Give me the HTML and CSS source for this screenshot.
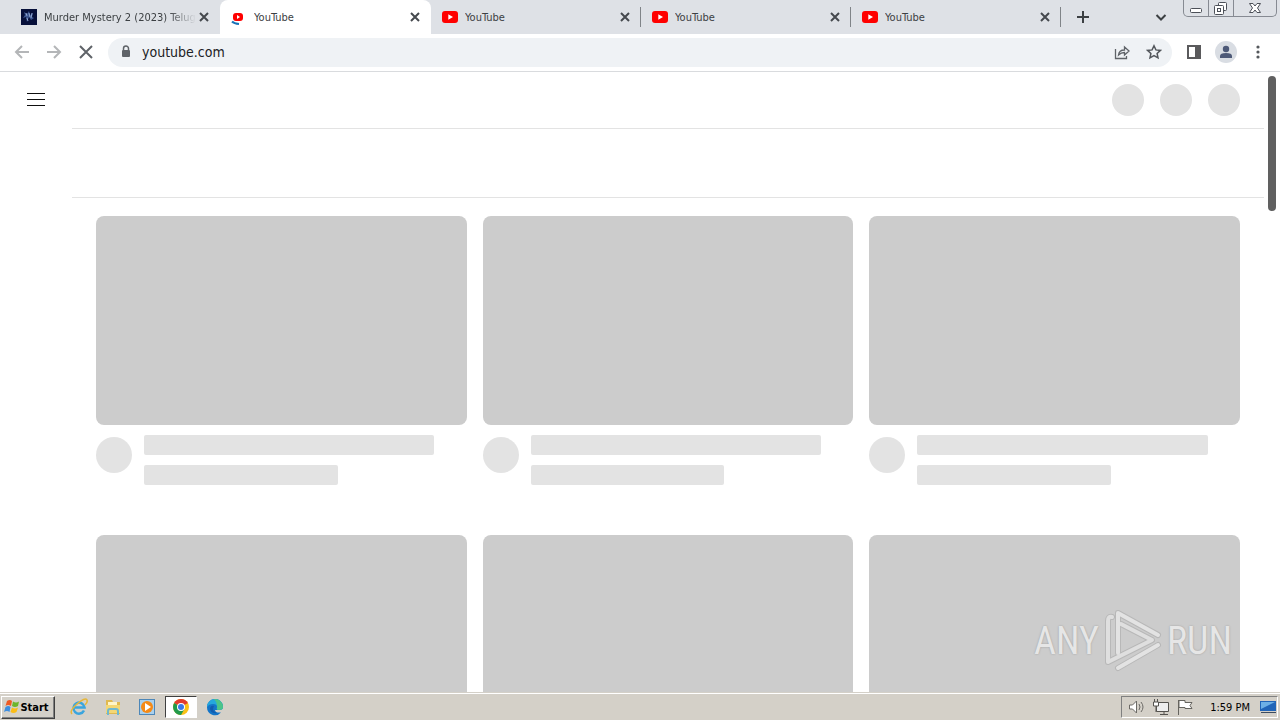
FILE: index.html
```html
<!DOCTYPE html>
<html lang="en">
<head>
    <meta charset="UTF-8">
    <meta name="viewport" content="width=device-width, initial-scale=1.0">
    <title>YouTube</title>
    <link rel="stylesheet" href="styles.css">
</head>
<body>
<!-- shared icons -->
<svg class="defs" aria-hidden="true">
    <symbol id="close" viewBox="0 0 16 16"><path d="M4 4l8 8M12 4l-8 8" stroke="#45494e" stroke-width="2"/></symbol>
    <symbol id="yt" viewBox="0 0 16 16"><rect y="2" width="16" height="12" rx="3" fill="#f00"/><path d="M6.3 5.3v5.4L11 8z" fill="#fff"/></symbol>
</svg>

<header class="tabstrip">
    <div class="tab">
        <svg class="favicon" viewBox="0 0 16 16">
            <rect width="16" height="16" fill="#07103a"/>
            <path d="M3 3l3 2 2-3 1 4 3-2-1 4 2 1-3 2-2-3-2 5-1-5-3 1 2-3z" fill="#3d5690"/>
            <path d="M5 4l1 3M8 4l1 4M11 4l-1 5M6 9l1 3" stroke="#8fa6d0"/>
        </svg>
        <span class="title fade">Murder Mystery 2 (2023) Telug</span>
        <button class="close" aria-label="Close tab"><svg><use href="#close"/></svg></button>
    </div>
    <div class="tab active">
        <svg class="favicon" viewBox="0 0 16 16">
            <rect x="2" y="4" width="10" height="8" rx="3" fill="#f00"/><path d="M6 6v4l3-2z" fill="#fff"/>
            <path d="M1 12.500q2 2 7 2.500" fill="none" stroke="#1a73b8" stroke-width="2"/>
        </svg>
        <span class="title">YouTube</span>
        <button class="close" aria-label="Close tab"><svg><use href="#close"/></svg></button>
    </div>
    <div class="tab divided">
        <svg class="favicon"><use href="#yt"/></svg>
        <span class="title">YouTube</span>
        <button class="close" aria-label="Close tab"><svg><use href="#close"/></svg></button>
    </div>
    <div class="tab divided">
        <svg class="favicon"><use href="#yt"/></svg>
        <span class="title">YouTube</span>
        <button class="close" aria-label="Close tab"><svg><use href="#close"/></svg></button>
    </div>
    <div class="tab divided">
        <svg class="favicon"><use href="#yt"/></svg>
        <span class="title">YouTube</span>
        <button class="close" aria-label="Close tab"><svg><use href="#close"/></svg></button>
    </div>
    <button class="new-tab" aria-label="New tab"><svg viewBox="0 0 16 16"><path d="M8 2v12M2 8h12" stroke="#3c4043" stroke-width="2"/></svg></button>
    <button class="tab-search" aria-label="Search tabs"><svg viewBox="0 0 16 16"><path d="M3.500 6L8 10.500 12.500 6" fill="none" stroke="#3c4043" stroke-width="2"/></svg></button>
    <div class="window-buttons">
        <button class="min" aria-label="Minimize"><svg viewBox="0 0 24 16"><rect x="6.500" y="8.500" width="11" height="4" rx="1" fill="#fff" stroke="#4c5058"/></svg></button>
        <button class="restore" aria-label="Restore"><svg viewBox="0 0 24 16"><g fill="#fff" stroke="#4c5058"><rect x="9.500" y="2.500" width="8" height="8" rx="1"/><rect x="5.500" y="5.500" width="9" height="9" rx="1"/><rect x="8.500" y="8.500" width="3" height="3"/></g></svg></button>
        <button class="exit" aria-label="Close"><svg viewBox="0 0 24 16"><path d="M6.500 3.500h3.500l2 2.500 2-2.500h3.500L14.500 8l3 4.500H14L12 10l-2 2.500H6.500L9.500 8z" fill="#fff" stroke="#4c5058"/></svg></button>
    </div>
</header>

<nav class="toolbar">
    <button aria-label="Back"><svg viewBox="0 0 16 16"><path d="M15 8H2M8 2L2 8l6 6" fill="none" stroke="#b4b6b8" stroke-width="2"/></svg></button>
    <button aria-label="Forward"><svg viewBox="0 0 16 16"><path d="M1 8h13M8 2l6 6-6 6" fill="none" stroke="#b4b6b8" stroke-width="2"/></svg></button>
    <button aria-label="Stop"><svg viewBox="0 0 16 16"><path d="M2 2l12 12M14 2L2 14" stroke="#5f6368" stroke-width="2"/></svg></button>
    <div class="address">
        <svg viewBox="0 0 16 16"><rect x="4" y="6" width="8" height="7" rx="1" fill="#5f6368"/><path d="M5.500 6V4.500a2.500 2.500 0 0 1 5 0V6" fill="none" stroke="#5f6368" stroke-width="1.500"/></svg>
        <input type="text" value="youtube.com" aria-label="Address">
        <button aria-label="Share"><svg viewBox="0 0 16 16"><path d="M1.500 5v9.500h11V12M4.500 11Q5 6 10.500 6V3L15 7l-4.500 4V8.500Q7 8.500 4.500 11z" fill="none" stroke="#5f6368" stroke-width="1.300"/></svg></button>
        <button aria-label="Bookmark"><svg viewBox="0 0 16 16"><path d="M8 1.800l1.900 4.100 4.500.5-3.300 3 .9 4.400L8 11.600l-4 2.200.9-4.400-3.300-3 4.500-.5z" fill="none" stroke="#53575c" stroke-width="1.500"/></svg></button>
    </div>
    <button aria-label="Side panel"><svg viewBox="0 0 16 16"><path d="M1 1h14v14H1zM3 3v10h6V3z" fill="#5a5a5c" fill-rule="evenodd"/></svg></button>
    <button class="profile" aria-label="Profile"><svg viewBox="0 0 22 22"><circle cx="11" cy="11" r="11" fill="#d9dde3"/><circle cx="11" cy="8" r="3.200" fill="#4d5977"/><path d="M5 17v-2q0-3 6-3t6 3v2z" fill="#4d5977"/></svg></button>
    <button aria-label="Menu"><svg viewBox="0 0 16 16" fill="#55585c"><circle cx="8" cy="3" r="1.600"/><circle cx="8" cy="8" r="1.600"/><circle cx="8" cy="13" r="1.600"/></svg></button>
</nav>

<main class="page">
    <aside class="guide">
        <button aria-label="Guide"><svg viewBox="0 0 24 24"><path d="M3 5.500h18M3 11.500h18M3 17.500h18" stroke="#0f0f0f"/></svg></button>
    </aside>
    <div class="content">
        <div class="masthead"><i></i><i></i><i></i></div>
        <div class="chips"></div>
        <div class="grid">
            <div class="video"><div class="thumb"></div><div class="details"><i></i><div class="lines"><b></b><b class="short"></b></div></div></div>
            <div class="video"><div class="thumb"></div><div class="details"><i></i><div class="lines"><b></b><b class="short"></b></div></div></div>
            <div class="video"><div class="thumb"></div><div class="details"><i></i><div class="lines"><b></b><b class="short"></b></div></div></div>
            <div class="video"><div class="thumb"></div></div>
            <div class="video"><div class="thumb"></div></div>
            <div class="video"><div class="thumb"></div></div>
        </div>
    </div>
    <div class="scrollbar"><div class="scroll-thumb"></div></div>
    <div class="watermark">
        <span>ANY</span>
        <svg viewBox="0 0 58 64">
            <g fill="none" stroke-linecap="round" stroke-linejoin="round">
                <path d="M8 8Q4 7 4 12V53L48 31 17 15" stroke="#b8b8b8" stroke-width="6"/>
                <path d="M14 44V4L54 26M14 59L54 36" stroke="#b8b8b8" stroke-width="6"/>
                <path d="M8 8Q4 7 4 12V53L48 31 17 15" stroke="#dfdfdf" stroke-width="4"/>
                <path d="M14 44V4L54 26M14 59L54 36" stroke="#e3e3e3" stroke-width="4"/>
            </g>
        </svg>
        <span>RUN</span>
    </div>
</main>

<footer class="taskbar">
    <button class="start">
        <svg viewBox="0 0 16 16"><path d="M3 2q3-2 5 0L7 7Q4 5 1.500 7z" fill="#ee5a24"/><path d="M9 2.500q3 2 6 0L14 7q-3 2-6 0z" fill="#6cb52d"/><path d="M1.500 8q3-2 5 0l-1 5Q3 11 0 13z" fill="#3d8ee0"/><path d="M8 8.500q3 2 6 0L12.500 13q-3 2-6 0z" fill="#fbbd16"/></svg>
        Start
    </button>
    <div class="launch">
        <button aria-label="Internet Explorer"><svg viewBox="0 0 18 18"><path d="M14 12.500A5.500 5.500 0 1 1 14.500 9.500H5" fill="none" stroke="#3aa5de" stroke-width="2.500"/><path d="M2 16Q-1 13 7 6T17 2q1 2-2 5" fill="none" stroke="#e6b73a" stroke-width="1.500"/></svg></button>
        <button aria-label="Explorer"><svg viewBox="0 0 18 18"><path d="M2 2h6l1 2h7v12H2z" fill="#e0b94f"/><path d="M4 4h9v4H4z" fill="#fff5c8"/><path d="M2 7h14v8H2z" fill="#f4d774"/><path d="M4 17v-4q0-2 2-2h6q2 0 2 2v4" fill="none" stroke="#6fb8d0" stroke-width="2"/></svg></button>
        <button aria-label="Media Player"><svg viewBox="0 0 18 18"><rect x="1.500" y="1.500" width="15" height="15" fill="#a9d0ed" stroke="#4d87b8"/><circle cx="9" cy="9" r="6" fill="#f58a16"/><path d="M7 5v8l6-4z" fill="#fff"/></svg></button>
        <button class="pressed" aria-label="Chrome"><svg viewBox="0 0 18 18"><circle cx="9" cy="9" r="8" fill="#fbc116"/><path d="M9 9L2.100 5A8 8 0 0 1 15.900 5z" fill="#e33b2e"/><path d="M9 9L2.100 5A8 8 0 0 0 9 17l3.500-6z" fill="#229a4b"/><circle cx="9" cy="9" r="4" fill="#fff"/><circle cx="9" cy="9" r="3" fill="#3b78e7"/></svg></button>
        <button aria-label="Edge"><svg viewBox="0 0 18 18"><path d="M1 9a8 8 0 0 1 16 0q0 3-4 3H9q0 3 6 2.500A8 8 0 0 1 1 9z" fill="#1475c8"/><path d="M1 9a8 8 0 0 1 16 0q0 3-4 3-3 0-2-3 0-3-4-3-4 0-6 3z" fill="#25a8dc"/><path d="M8 1.100A8 8 0 0 1 17 9q0 3-4 3-3 0-2-2 1-5-3-8.900z" fill="#4cc488"/><path d="M8 8q-3 5 3 7-7 1-7-5 1-3 4-2z" fill="#125cae"/></svg></button>
    </div>
    <div class="tray">
        <svg viewBox="0 0 18 18"><path d="M1.500 7v4h3l4 4V3l-4 4z" fill="#fff" stroke="#6c6a66"/><path d="M11 6q2 3 0 6M13 4q4 5 0 10" fill="none" stroke="#6c6a66"/></svg>
        <svg viewBox="0 0 18 18"><path d="M4.500 4.500h12v9h-12zM8 16.500h8M12 14v2" fill="#eee" stroke="#55534f"/><path d="M1.500 4v4h5V4zM2.500 1v3M5.500 1v3M4 8v6" fill="#fff" stroke="#55534f"/></svg>
        <svg viewBox="0 0 18 18"><path d="M2.500 2v15M3 2.500h6v2h7l-2 3 2 3H9v-1H3z" fill="#fff" stroke="#66645f"/></svg>
        <time>1:59 PM</time>
        <svg class="desktop" viewBox="0 0 18 18"><path d="M1 3h16v10H1z" fill="#2165b8"/><path d="M2 4h14L2 11z" fill="#6db0e6"/><path d="M2 14.500h15" stroke="#3b4b60"/></svg>
    </div>
</footer>
</body>
</html>
```
FILE: styles.css
```css
* {
    box-sizing: border-box;
}
body {
    margin: 0;
    height: 100vh;
    display: flex;
    flex-direction: column;
    overflow: hidden;
    background: #fff;
    font-family: "DejaVu Sans Condensed", "DejaVu Sans", sans-serif;
    font-size: 11px;
    color: #3c4043;
}
button {
    display: flex;
    align-items: center;
    justify-content: center;
    padding: 0;
    border: none;
    background: none;
    font: inherit;
    color: inherit;
}
svg {
    display: block;
    flex: none;
    width: 16px;
    height: 16px;
}
.defs {
    position: absolute;
    width: 0;
    height: 0;
}

/* tabs */
.tabstrip {
    display: flex;
    flex: none;
    height: 34px;
    padding: 0 3px 0 10px;
    background: #dee1e6;
}
.tab {
    display: flex;
    align-items: center;
    flex: 0 1 210px;
    min-width: 0;
    padding: 0 8px 0 11px;
}
.tab.active {
    flex-basis: 211px;
    background: #fff;
    border-radius: 8px 8px 0 0;
}
.tab.divided {
    background: linear-gradient(#808488, #808488) right center / 1px 20px no-repeat;
}
.favicon {
    margin-right: 7px;
}
.title {
    flex: 1;
    overflow: hidden;
    white-space: nowrap;
}
.fade {
    -webkit-mask-image: linear-gradient(to right, #000 82%, transparent);
    mask-image: linear-gradient(to right, #000 82%, transparent);
}
.new-tab {
    width: 44px;
}
.tab-search {
    width: 32px;
    margin-left: auto;
}
.window-buttons {
    display: flex;
    height: 17px;
    margin-left: 6px;
    border: 1px solid #868a92;
    border-top: none;
    border-radius: 0 0 5px 5px;
}
.window-buttons button {
    width: 25px;
    border-right: 1px solid #868a92;
}
.window-buttons .exit {
    width: 42px;
    border-right: none;
}
.window-buttons svg {
    width: 24px;
}

/* toolbar */
.toolbar {
    display: flex;
    align-items: center;
    flex: none;
    height: 38px;
    padding: 0 6px 1px;
    border-bottom: 1px solid #d9dbde;
}
.toolbar button {
    width: 32px;
    height: 32px;
}
.toolbar .profile svg {
    width: 22px;
    height: 22px;
}
.address {
    display: flex;
    align-items: center;
    flex: 1;
    height: 29px;
    margin: 0 6px;
    padding: 0 2px 0 10px;
    border-radius: 15px;
    background: #eff2f5;
}
.address input {
    flex: 1;
    min-width: 0;
    padding: 0 8px;
    border: none;
    background: none;
    font: inherit;
    font-size: 14px;
    color: #202124;
}

/* page */
.page {
    position: relative;
    display: flex;
    flex: 1;
    min-height: 0;
    overflow: hidden;
}
.guide {
    width: 72px;
    padding: 16px 24px;
}
.guide svg {
    width: 24px;
    height: 24px;
}
.content {
    flex: 1;
}
.masthead {
    display: flex;
    align-items: center;
    justify-content: flex-end;
    gap: 16px;
    height: 57px;
    padding-right: 24px;
    border-bottom: 1px solid #e3e3e3;
}
.masthead i {
    width: 32px;
    height: 32px;
    border-radius: 50%;
    background: #e3e3e3;
}
.chips {
    height: 69px;
    border-bottom: 1px solid #e3e3e3;
}
.grid {
    display: grid;
    grid-template-columns: repeat(3, 1fr);
    gap: 50px 16px;
    padding: 18px 24px;
}
.thumb {
    aspect-ratio: 39 / 22;
    border-radius: 8px;
    background: #ccc;
}
.details {
    display: flex;
    gap: 12px;
    padding-top: 10px;
}
.details i {
    width: 36px;
    height: 36px;
    margin-top: 2px;
    border-radius: 50%;
    background: #e3e3e3;
}
.lines {
    display: flex;
    flex-direction: column;
    flex: 1;
    gap: 10px;
}
.lines b {
    width: 90%;
    height: 20px;
    border-radius: 2px;
    background: #e3e3e3;
}
.lines .short {
    width: 60%;
}
.scrollbar {
    width: 16px;
    padding: 4px;
}
.scroll-thumb {
    height: 22%;
    border-radius: 4px;
    background: #606060;
}
.watermark {
    position: absolute;
    right: 48px;
    bottom: 19px;
    display: flex;
    align-items: center;
    gap: 5px;
    font-family: "Roboto Condensed", Roboto, sans-serif;
    font-size: 38px;
    color: #e6e6e6;
    text-shadow: 0 0 2px #999;
}
.watermark svg {
    width: 58px;
    height: 64px;
}

/* taskbar */
.taskbar {
    display: flex;
    align-items: center;
    flex: none;
    height: 28px;
    padding: 2px 2px 1px 1px;
    border-top: 1px solid #d4d0c8;
    box-shadow: inset 0 1px #fff;
    background: #d4d0c8;
    color: #000;
}
.start {
    width: 54px;
    height: 23px;
    padding-right: 3px;
    border: 1px solid;
    border-color: #fff #404040 #404040 #fff;
    box-shadow: inset -1px -1px #808080;
    font-weight: bold;
}
.launch {
    display: flex;
    gap: 2px;
    margin-left: 8px;
}
.launch button {
    width: 32px;
    height: 22px;
}
.launch svg {
    width: 18px;
    height: 18px;
}
.launch .pressed {
    border: 1px solid;
    border-color: #404040 #fff #fff #404040;
    background: #fff;
}
.tray {
    display: flex;
    align-items: center;
    gap: 6px;
    height: 22px;
    margin-left: auto;
    padding-left: 6px;
    border: 1px solid;
    border-color: #808080 #fff #fff #808080;
}
.tray svg {
    width: 18px;
    height: 18px;
}
.tray time {
    margin: 0 3px 0 10px;
}
```
